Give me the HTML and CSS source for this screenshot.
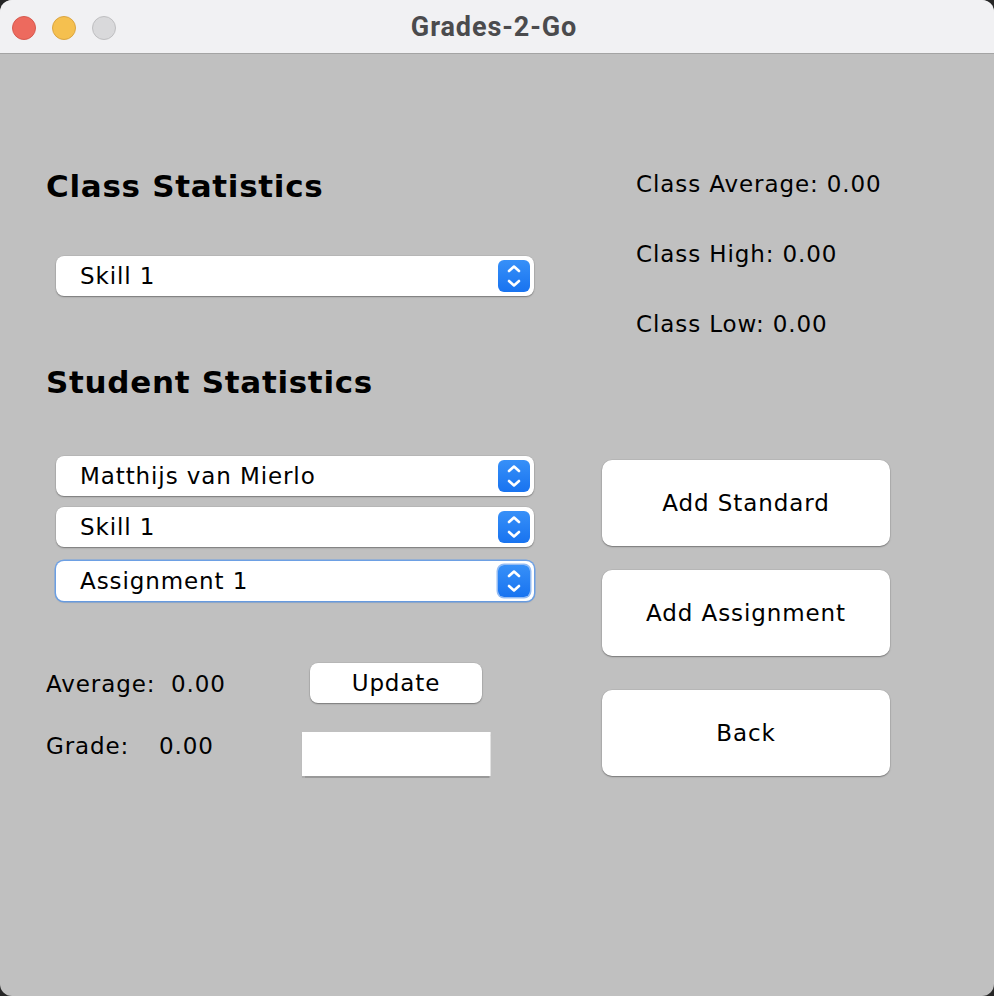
FILE: index.html
```html
<!DOCTYPE html>
<html lang="en">
<head>
<meta charset="utf-8">
<title>Grades-2-Go</title>
<link rel="stylesheet" href="styles.css">
</head>
<body>
<div class="window">
  <div class="titlebar">
    <div class="lights">
      <span class="light light-red"></span>
      <span class="light light-yellow"></span>
      <span class="light light-grey"></span>
    </div>
    <div class="title">Grades-2-Go</div>
    <div class="spacer"></div>
  </div>
  <div class="content">
    <div class="left">
      <h2 class="heading heading-class">Class Statistics</h2>
      <div class="combo combo-class">
        <span class="combo-text">Skill 1</span>
        <span class="arrow"><svg viewBox="0 0 32 32" width="32" height="32"><path d="M11 11 L16 6.5 L21 11 M11 21 L16 25.5 L21 21" fill="none" stroke="#fff" stroke-width="2.6" stroke-linecap="round" stroke-linejoin="round"/></svg></span>
      </div>
      <h2 class="heading heading-student">Student Statistics</h2>
      <div class="combo combo-student">
        <span class="combo-text">Matthijs van Mierlo</span>
        <span class="arrow"><svg viewBox="0 0 32 32" width="32" height="32"><path d="M11 11 L16 6.5 L21 11 M11 21 L16 25.5 L21 21" fill="none" stroke="#fff" stroke-width="2.6" stroke-linecap="round" stroke-linejoin="round"/></svg></span>
      </div>
      <div class="combo combo-skill">
        <span class="combo-text">Skill 1</span>
        <span class="arrow"><svg viewBox="0 0 32 32" width="32" height="32"><path d="M11 11 L16 6.5 L21 11 M11 21 L16 25.5 L21 21" fill="none" stroke="#fff" stroke-width="2.6" stroke-linecap="round" stroke-linejoin="round"/></svg></span>
      </div>
      <div class="combo combo-assign focused">
        <span class="combo-text">Assignment 1</span>
        <span class="arrow"><svg viewBox="0 0 32 32" width="32" height="32"><path d="M11 11 L16 6.5 L21 11 M11 21 L16 25.5 L21 21" fill="none" stroke="#fff" stroke-width="2.6" stroke-linecap="round" stroke-linejoin="round"/></svg></span>
      </div>
      <div class="row row-avg">
        <span class="lbl lbl-avg">Average:</span>
        <span class="val val-avg">0.00</span>
        <button class="btn btn-update">Update</button>
      </div>
      <div class="row row-grade">
        <span class="lbl lbl-grade">Grade:</span>
        <span class="val val-grade">0.00</span>
        <div class="field"></div>
      </div>
    </div>
    <div class="right">
      <div class="stats">
        <div class="stat">Class Average: 0.00</div>
        <div class="stat">Class High: 0.00</div>
        <div class="stat">Class Low: 0.00</div>
      </div>
      <div class="buttons">
        <button class="btn btn-big btn-standard">Add Standard</button>
        <button class="btn btn-big btn-assign">Add Assignment</button>
        <button class="btn btn-big btn-back">Back</button>
      </div>
    </div>
  </div>
</div>
</body>
</html>
```
FILE: styles.css
```css
html, body {
  margin: 0;
  padding: 0;
  width: 994px;
  height: 996px;
  background: #262626;
  overflow: hidden;
}

.window {
  width: 994px;
  height: 996px;
  border-radius: 12px;
  overflow: hidden;
  background: #c0c0c0;
  display: flex;
  flex-direction: column;
  font-family: "DejaVu Sans", Verdana, sans-serif;
  color: #000;
}

.titlebar {
  height: 53px;
  flex: 0 0 53px;
  background: #f1f1f3;
  border-bottom: 1px solid #a4a4a4;
  display: grid;
  grid-template-columns: 1fr auto 1fr;
  align-items: center;
}

.lights {
  display: flex;
  gap: 16px;
  padding-left: 12px;
  padding-top: 2px;
}

.light {
  width: 22px;
  height: 22px;
  border-radius: 50%;
  display: block;
}

.light-red {
  background: #ed6a5e;
  border: 1px solid #d65a4f;
}

.light-yellow {
  background: #f5c04f;
  border: 1px solid #dba541;
}

.light-grey {
  background: #d9d9db;
  border: 1px solid #bfbfc1;
}

.title {
  font-family: Roboto, "Liberation Sans", sans-serif;
  font-weight: 700;
  font-size: 27px;
  letter-spacing: 0.9px;
  color: #4b4b4d;
  padding-right: 6px;
}

.content {
  flex: 1;
  display: flex;
  padding-left: 46px;
  gap: 68px;
}

.left {
  width: 488px;
  display: flex;
  flex-direction: column;
}

.heading {
  margin: 0;
  font-weight: 700;
  font-size: 31px;
  line-height: 31px;
  letter-spacing: 0.7px;
}

.heading-class {
  margin-top: 117px;
}

.heading-student {
  margin-top: 71px;
}

.combo {
  margin-left: 10px;
  width: 478px;
  height: 40px;
  box-sizing: border-box;
  background: #fff;
  border-radius: 8px;
  box-shadow: 0 1px 1.5px rgba(0, 0, 0, 0.35), 0 0 0 0.5px rgba(0, 0, 0, 0.08);
  display: flex;
  align-items: center;
  justify-content: space-between;
  padding: 0 4px 0 24px;
}

.combo-text {
  font-size: 23px;
  line-height: 23px;
  letter-spacing: 0.9px;
}

.arrow {
  width: 32px;
  height: 32px;
  border-radius: 6px;
  background: linear-gradient(#3790f8, #1873f0);
  display: block;
}

.arrow svg {
  display: block;
}

.combo-class {
  margin-top: 54px;
}

.combo-student {
  margin-top: 58px;
}

.combo-skill {
  margin-top: 11px;
}

.combo-assign {
  margin-top: 14px;
}

.focused {
  box-shadow: 0 0 0 1.5px rgba(95, 155, 235, 0.85), 0 1px 2px rgba(0, 0, 0, 0.3);
}

.focused .arrow {
  box-shadow: 0 0 0 1.5px rgba(120, 170, 240, 0.8);
}

.row {
  display: flex;
  align-items: flex-start;
  font-size: 23px;
  line-height: 23px;
  letter-spacing: 0.9px;
}

.row-avg {
  margin-top: 62px;
}

.row-grade {
  margin-top: 29px;
}

.lbl, .val {
  display: block;
}

.row-avg .lbl, .row-avg .val {
  margin-top: 10px;
}

.row-grade .lbl, .row-grade .val {
  margin-top: 3px;
}

.lbl-avg {
  width: 125px;
}

.val-avg {
  width: 139px;
}

.lbl-grade {
  width: 113px;
}

.val-grade {
  width: 143px;
}

.btn {
  font-family: "DejaVu Sans", Verdana, sans-serif;
  font-size: 23px;
  letter-spacing: 0.9px;
  color: #000;
  background: #fff;
  border: none;
  padding: 0;
  margin: 0;
  box-shadow: 0 1px 1.5px rgba(0, 0, 0, 0.35), 0 0 0 0.5px rgba(0, 0, 0, 0.08);
}

.btn-update {
  width: 172px;
  height: 40px;
  border-radius: 8px;
}

.field {
  width: 188px;
  height: 44px;
  background: #fff;
  box-shadow: 0 1.5px 1px rgba(0, 0, 0, 0.2), 1px 0 0 rgba(255, 255, 255, 0.6);
}

.right {
  width: 288px;
  display: flex;
  flex-direction: column;
}

.stats {
  margin-top: 119px;
  padding-left: 34px;
  display: flex;
  flex-direction: column;
  gap: 47px;
}

.stat {
  font-size: 23px;
  line-height: 23px;
  letter-spacing: 0.9px;
}

.buttons {
  margin-top: 124px;
  display: flex;
  flex-direction: column;
}

.btn-big {
  width: 288px;
  height: 86px;
  border-radius: 10px;
}

.btn-assign {
  margin-top: 24px;
}

.btn-back {
  margin-top: 34px;
}
```
